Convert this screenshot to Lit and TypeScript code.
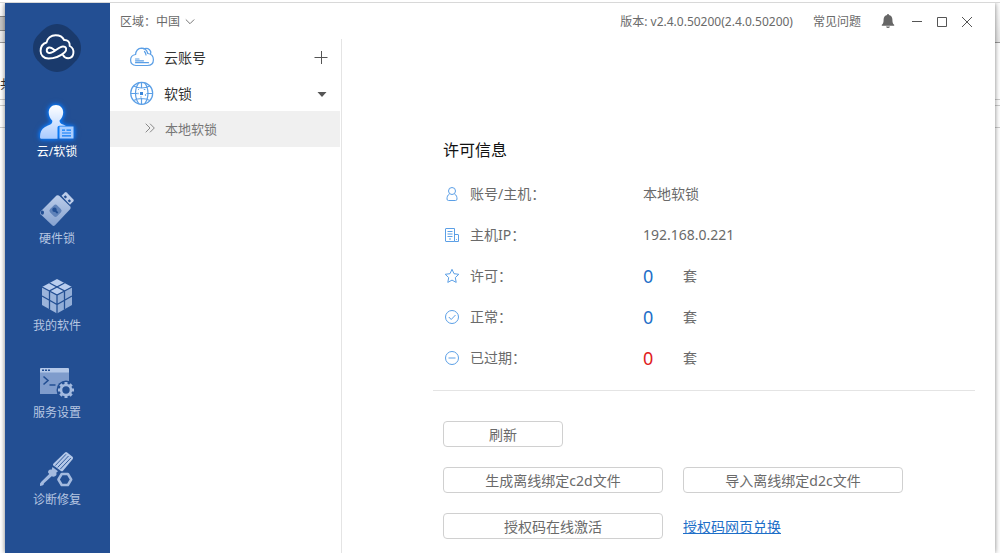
import { LitElement, html, css, svg, TemplateResult } from "lit";
import { customElement, property, state } from "lit/decorators.js";
import { classMap } from "lit/directives/class-map.js";

const cubeFace = (points: string, opacity: string) =>
  svg`<polygon points=${points} fill="#b9cdee" opacity=${opacity} stroke="none"/>`;

const gearTeeth = [0, 45, 90, 135, 180, 225, 270, 315];

const NAV_ICONS: Record<string, TemplateResult> = {
  user: html`<svg viewBox="0 0 40 40" class="glow" aria-hidden="true">
    <defs>
      <linearGradient id="u" x1="0" y1="0" x2="0" y2="1">
        <stop offset="0" stop-color="#ffffff" /><stop offset="1" stop-color="#a9cbff" />
      </linearGradient>
    </defs>
    <path fill="url(#u)" d="M19 3c4.400 0 7.200 3.200 7.200 7.500 0 3.200-1.600 6.300-3.700 8 0 2.200 1.300 3.200 3.500 4.100l3 1.200h-6.500c-1.200 0-2 .8-2 2v11H4.500c-1 0-1.500-.7-1.500-1.800 0-4.500 1.500-7.800 5-9.900 3-1.800 7.300-2.300 7.300-5.500 0-.5 0-.8-.1-1.100-2-1.700-3.500-4.800-3.500-8C11.700 6.200 14.600 3 19 3z" />
    <path fill="#a9cdff" fill-rule="evenodd" d="M22.500 24.500h14v12h-14zM25 27.500v1.200h3v-1.200zm4.500 0v1.200H34v-1.200zM25 30.400v1.200h9v-1.200zM25 33.200v1.200h9v-1.200z" />
  </svg>`,
  usb: html`<svg viewBox="0 0 40 40" aria-hidden="true">
    <defs>
      <linearGradient id="s" x1="0" y1="0" x2="0" y2="1">
        <stop offset="0" stop-color="#bccdea" /><stop offset="1" stop-color="#86a2cf" />
      </linearGradient>
    </defs>
    <path fill="url(#s)" d="M19.500 6.600q1.600-.9 3 .3l10.700 10.500q1 1.200.1 2.700L18 36.300q-1.400 1.200-2.800 0L3.600 25.200q-1-1.200 0-2.600z" />
    <path fill="#bccdea" d="M24.500 6.800l3.400-3.300q.9-.8 1.800 0l6.700 7q.8.900 0 1.800L33 15.800z" />
    <path fill="#234f93" d="M28.300 6.200l1.800 1.700-1.700 1.600-1.700-1.700zM32.300 10.200l1.800 1.700-1.700 1.600-1.700-1.700z" />
    <rect x="13.500" y="16.700" width="10" height="10" rx="2.500" transform="rotate(45 18.500 21.700)" fill="#5f82b9" />
    <circle cx="17.500" cy="20.800" r="2.200" fill="#234f93" /><path stroke="#234f93" stroke-width="1.800" d="M18.500 22l2.200 2" />
    <ellipse cx="5.400" cy="23.600" rx="1.600" ry="2.200" fill="#234f93" />
  </svg>`,
  cube: html`<svg viewBox="0 0 40 40" aria-hidden="true">
    ${cubeFace("20,3 35,11 20,19 5,11", "1")}
    ${cubeFace("5,11 20,19 20,37.500 5,29", "0.800")}
    ${cubeFace("35,11 20,19 20,37.500 35,29", "0.750")}
    <path fill="none" stroke="#234f93" stroke-width="1.300" d="M5 11l15 8 15-8M20 19v19M12.500 7l15 8v18.500M27.500 7l-15 8v18.500M5 20l15 8.500L35 20" />
  </svg>`,
  console: html`<svg viewBox="0 0 40 40" aria-hidden="true">
    <path fill="#7f9ccc" d="M3 9h29v22H3z" />
    <path fill="#b4c8e8" d="M4 5h27q1 0 1 1v3.500H3V6q0-1 1-1z" />
    <path fill="#234f93" d="M5 6.500h2v1.500H5zM8 6.500h2v1.500H8zM11 6.500h2v1.500h-2z" />
    <path fill="none" stroke="#234f93" stroke-width="1.600" d="M6.500 13.500l4.500 4-4.500 4M12.500 22h6" />
    <circle cx="29" cy="27" r="9.500" fill="#234f93" />
    ${gearTeeth.map((a) => svg`<rect x="27.500" y="19" width="3" height="4" fill="#a3badf" transform="rotate(${a} 29 27)"/>`)}
    <circle cx="29" cy="27" r="5" fill="none" stroke="#a3badf" stroke-width="2.600" />
  </svg>`,
  tools: html`<svg viewBox="0 0 40 40" aria-hidden="true">
    <path fill="#b4c8e8" d="M28 2.500q1-.8 2.200 0l5.300 4.200q1 1 .3 2.200L26 20.800q-.8.900-2 .3l-7.600-5.600q-.9-.9-.1-1.800z" />
    <path stroke="#234f93" stroke-width=".9" d="M18.300 15.600L29 4.300M20.700 17.400L31.500 6M23.200 19.200L33.800 8" />
    <path fill="#a3badf" d="M15.500 17l5.500 4.200-1.600 1.300q.6 2.300-1 3.500-1.700 1.200-3.700.3L7 33.300q0 1.800-1.700 2.300L3 36q-.6-2.800 1.300-4.300l7.900-7.700q-2.100-1.700-.8-3.300 1.200-1.400 3.200-1z" />
    <path fill="none" stroke="#a3badf" stroke-width="2.500" stroke-linejoin="round" d="M24.700 24h6.200l3.300 5.500-3.300 5.500h-6.200l-3.300-5.500z" />
  </svg>`,
};

const INFO_ICONS: Record<string, TemplateResult> = {
  person: svg`<circle cx="9" cy="6" r="3.500"/><path d="M6.500 9C4.500 10 4 12 4 14q0 1.500 1.500 1.500h7Q14 15.500 14 14c0-2-.5-4-2.500-5"/>`,
  host: svg`<path d="M3 2.500h8.500v13H3q-.5 0-.5-.5V3q0-.5.5-.5zM11.500 8.500H15q.5 0 .5.500v6.500h-4M4.500 5.500h5M4.500 8h5M4.500 10.500h5M13.500 13v.8M6 13h2"/>`,
  star: svg`<path stroke-linejoin="round" d="M9 2.300l2 4.400 4.800.6-3.500 3.300.9 4.800L9 13.100l-4.200 2.300.9-4.800-3.500-3.300 4.800-.6z"/>`,
  check: svg`<circle cx="9" cy="9" r="6.500"/><path d="M5.800 9l2.400 2.500 4.300-4.500"/>`,
  minus: svg`<circle cx="9" cy="9" r="6.500"/><path d="M5.500 9h7"/>`,
};

const FONT = css`
  :host {
    font-family: "Noto Sans", "Noto Sans CJK SC", sans-serif;
  }
  button {
    font: inherit;
    color: inherit;
    background: none;
    border: 0;
    padding: 0;
    cursor: pointer;
  }
  svg {
    display: block;
  }
`;

@customElement("side-nav")
class SideNav extends LitElement {
  @state() private active = "user";

  private items = [
    { id: "user", text: "云/软锁" },
    { id: "usb", text: "硬件锁" },
    { id: "cube", text: "我的软件" },
    { id: "console", text: "服务设置" },
    { id: "tools", text: "诊断修复" },
  ];

  static styles = [
    FONT,
    css`
      :host {
        display: flex;
        flex-direction: column;
        align-items: stretch;
        box-sizing: border-box;
        padding: 21px 1px 0 0;
        background: #234f93;
      }
      .logo {
        align-self: center;
        width: 48px;
        height: 48px;
        margin-bottom: 30px;
      }
      nav {
        display: flex;
        flex-direction: column;
      }
      .item {
        display: flex;
        flex-direction: column;
        align-items: center;
        height: 87px;
        font-size: 12px;
        line-height: 20px;
        color: #b6c6e2;
      }
      .item svg {
        width: 40px;
        height: 40px;
        flex: none;
      }
      .active {
        color: #ffffff;
      }
      .glow {
        filter: drop-shadow(0 0 2px #0a84ff) drop-shadow(0 0 2px #0a6cf0);
      }
    `,
  ];

  render() {
    return html`
      <svg class="logo" viewBox="0 0 48 48" role="img" aria-label="云">
        <path fill="#1a3a6c" d="M24 0c7 0 12 4 16.500 8.500S48 17 48 24s-3 11-7.500 15.500S31 48 24 48s-12-4-16.500-8.500S0 31 0 24 3 13 7.500 8.500 17 0 24 0z" />
        <path fill="none" stroke="#fff" stroke-width="1.900" stroke-linecap="round" stroke-linejoin="round"
          d="M22 26.500c-2-1.500-3.500-3.500-6-3-3 .7-3 5 0 5.500 5 .8 9-6.500 14-6.500 3.500 0 4.300 3.500 1.500 6C28 31.500 22 34.500 15.500 34.500 10.500 34.500 7.600 31 7.600 27c0-4.500 2.500-7.500 6-8.500.5-4.500 4.500-7.300 9-7.300 4 0 7 1.500 8.500 4.800 3.500-.3 6 2.200 5.600 6 3 1.500 4 4.500 3.700 7.200-.4 3.300-2.500 5-5.300 5-2.500 0-4-1.200-5-3" />
      </svg>
      <nav>
        ${this.items.map(
          (it) => html`<button
            class=${classMap({ item: true, active: it.id === this.active })}
            @click=${() => (this.active = it.id)}
          >
            ${NAV_ICONS[it.id]}<span>${it.text}</span>
          </button>`
        )}
      </nav>
    `;
  }
}

@customElement("title-bar")
class TitleBar extends LitElement {
  static styles = [
    FONT,
    css`
      :host {
        display: flex;
        align-items: center;
        justify-content: space-between;
        box-sizing: border-box;
        height: 36px;
        padding: 2px 23px 0 10px;
        font-size: 12px;
        line-height: 18px;
        color: #6a6a6a;
      }
      .region,
      .tools,
      .window {
        display: flex;
        align-items: center;
      }
      .picker {
        display: grid;
        align-items: center;
        justify-items: end;
      }
      select {
        grid-area: 1 / 1;
        appearance: none;
        border: 0;
        padding: 0 14px 0 0;
        margin: 0;
        background: none;
        font: inherit;
        color: inherit;
      }
      .picker svg {
        grid-area: 1 / 1;
        pointer-events: none;
      }
      .tools {
        gap: 20px;
      }
      .window {
        gap: 15px;
      }
    `,
  ];

  render() {
    return html`
      <div class="region">
        <label for="region">区域：</label>
        <span class="picker">
          <select id="region"><option>中国</option></select>
          <svg width="10" height="10" viewBox="0 0 10 10" fill="none" stroke="#777"><path d="M.8 2.500L5 6.700 9.200 2.500" /></svg>
        </span>
      </div>
      <div class="tools">
        <span>版本: v2.4.0.50200(2.4.0.50200)</span>
        <button>常见问题</button>
        <div class="window">
          <button aria-label="通知">
            <svg width="16" height="16" viewBox="0 0 16 16" fill="#666"><path d="M6.200.500q0-.8.800-.8t.8.800v.5c2.400.5 3.600 2.300 3.600 4.500 0 2.500.3 4.300 1.800 5.300v.9H.8v-.9c1.500-1 1.800-2.800 1.800-5.300C2.600 3.300 3.900 1.500 6.200 1zM5 12.500h4Q8.500 14 7 14t-2-1.500z" /></svg>
          </button>
          <button aria-label="最小化">
            <svg width="10" height="10" viewBox="0 0 10 10" stroke="#555"><path d="M0 4.500h10" /></svg>
          </button>
          <button aria-label="最大化">
            <svg width="10" height="10" viewBox="0 0 10 10" fill="none" stroke="#555"><path d="M.5.500h9v9h-9z" /></svg>
          </button>
          <button aria-label="关闭">
            <svg width="10" height="10" viewBox="0 0 10 10" stroke="#555"><path d="M0 0l10 10M10 0L0 10" /></svg>
          </button>
        </div>
      </div>
    `;
  }
}

@customElement("lock-list")
class LockList extends LitElement {
  @state() private open = true;

  static styles = [
    FONT,
    css`
      :host {
        display: block;
        box-sizing: border-box;
        padding-right: 1px;
        border-right: 1px solid #e4e4e4;
        font-size: 14px;
        color: #333333;
      }
      .row {
        display: flex;
        align-items: center;
        gap: 10px;
        width: 100%;
        height: 36px;
        padding: 0 12px 0 20px;
        box-sizing: border-box;
        text-align: left;
      }
      .name {
        flex: 1;
      }
      .sub {
        padding: 0 12px 2px 35px;
        font-size: 13px;
        color: #777777;
        background: #f0f0f0;
      }
    `,
  ];

  render() {
    return html`
      <div class="row">
        <svg width="24" height="24" viewBox="0 0 24 24" fill="none" stroke="#5b9fe6" stroke-width="1.200" stroke-linecap="round">
          <path d="M6 20.500q-5.400-.4-5.400-5.500 0-4.800 5-5.500Q6 3.500 11.500 3.100q4.800 0 6.300 5.400 5.600.5 5.600 6.300 0 5.700-6 5.700z" />
          <path d="M13.500 3.800q4-1 6 .9t1 4.300M14.500 6.500q1.300 1.500 1.500 3.500M5.500 14h3.500M5.500 15.800h8M5.500 17.700h13" />
        </svg>
        <span class="name">云账号</span>
        <button aria-label="添加云账号">
          <svg width="14" height="14" viewBox="0 0 14 14" stroke="#555"><path d="M.5 7.500h13M7.500 1v13" /></svg>
        </button>
      </div>
      <button class="row" aria-expanded=${this.open} @click=${() => (this.open = !this.open)}>
        <svg width="24" height="24" viewBox="0 0 24 24" fill="none" stroke="#5b9fe6" stroke-width="1.200">
          <circle cx="11.700" cy="12.300" r="11" />
          <path d="M3.500 5q8.200 4 16.400 0M3.500 19.500q8.200-4 16.400 0M.7 12.500h6.500M16.500 12.500H23M11.500 1.300v6M11.500 17v6.300M9 1.600Q5.500 6 5.500 12.300T9 23M14.500 1.600Q18 6 18 12.300T14.500 23" />
          <path stroke-dasharray="1.500 5" stroke-dashoffset=".7" d="M8 8.500h7.500v7.500H8z" />
          <path fill="#3b86d8" stroke="none" d="M10 11h3v3h-3z" />
        </svg>
        <span class="name">软锁</span>
        <svg width="12" height="12" viewBox="0 0 12 12" fill="#555"><path d="M1.500 5h9L6 10z" /></svg>
      </button>
      ${this.open
        ? html`<button class="row sub">
            <svg width="10" height="10" viewBox="0 0 10 10" fill="none" stroke="#888"><path d="M.7.700L5 5 .7 9.300M5 .700L9.300 5 5 9.300" /></svg>
            <span>本地软锁</span>
          </button>`
        : null}
    `;
  }
}

@customElement("license-info")
class LicenseInfo extends LitElement {
  private rows = [
    { icon: "person", label: "账号/主机：", value: "本地软锁" },
    { icon: "host", label: "主机IP：", value: "192.168.0.221" },
    { icon: "star", label: "许可：", count: 0 },
    { icon: "check", label: "正常：", count: 0 },
    { icon: "minus", label: "已过期：", count: 0, alert: true },
  ];

  static styles = [
    FONT,
    css`
      :host {
        display: block;
        box-sizing: border-box;
        padding: 99px 20px 0 91px;
        font-size: 14px;
        line-height: 20px;
        color: #6a6a6a;
      }
      h1 {
        margin: 0 0 11px;
        padding-left: 10px;
        font-size: 16px;
        font-weight: 400;
        line-height: 24px;
        color: #111111;
      }
      dl {
        margin: 0;
        padding: 0 0 12px 10px;
        border-bottom: 1px solid #e4e4e4;
      }
      .row {
        display: grid;
        grid-template-columns: 200px 1fr;
        align-items: center;
        height: 41px;
      }
      dt,
      dd {
        display: flex;
        align-items: center;
        margin: 0;
      }
      dt {
        gap: 9px;
      }
      .count {
        width: 40px;
        font-size: 18px;
        color: #1e6fc8;
      }
      .alert {
        color: #e02020;
      }
      .actions {
        display: grid;
        grid-template-columns: 220px 220px;
        gap: 20px;
        padding: 30px 0 14px 10px;
      }
      .btn {
        box-sizing: border-box;
        height: 26px;
        padding-top: 2px;
        border: 1px solid #d0d0d0;
        border-radius: 4px;
        background: #ffffff;
      }
      .short {
        width: 120px;
        grid-column: 1 / -1;
      }
      a {
        align-self: center;
        justify-self: start;
        padding-top: 2px;
        color: #1e6fc8;
      }
    `,
  ];

  render() {
    return html`
      <h1>许可信息</h1>
      <dl>
        ${this.rows.map(
          (r) => html`<div class="row">
            <dt>
              <svg width="18" height="18" viewBox="0 0 18 18" fill="none" stroke="#5b9fe6">${INFO_ICONS[r.icon]}</svg>
              ${r.label}
            </dt>
            <dd>
              ${r.value ??
              html`<span class=${classMap({ count: true, alert: !!r.alert })}>${r.count}</span><span>套</span>`}
            </dd>
          </div>`
        )}
      </dl>
      <div class="actions">
        <button class="btn short">刷新</button>
        <button class="btn">生成离线绑定c2d文件</button>
        <button class="btn">导入离线绑定d2c文件</button>
        <button class="btn">授权码在线激活</button>
        <a href="#redeem">授权码网页兑换</a>
      </div>
    `;
  }
}

@customElement("back-strip")
class BackStrip extends LitElement {
  @property() text = "";

  static styles = [
    FONT,
    css`
      :host {
        display: block;
        overflow: hidden;
        background: #ffffff;
        font-size: 12px;
        line-height: 16px;
        color: #333333;
      }
      div {
        box-sizing: border-box;
        border-bottom: 1px solid #cccccc;
      }
      .bar {
        height: 40px;
        padding-top: 13px;
        border-color: #999999;
        background: linear-gradient(#ffffff, #e8e8e8);
      }
      .chip {
        display: block;
        box-sizing: border-box;
        height: 15px;
        border: 1px solid #888888;
        border-width: 1px 0;
        background: #c4c4c4;
      }
      .line {
        display: flex;
        align-items: flex-end;
        height: 57px;
        padding-bottom: 6px;
        white-space: nowrap;
      }
      .thin {
        height: 6px;
      }
      .wide {
        height: 22px;
      }
    `,
  ];

  render() {
    return html`
      <div class="bar">${this.text ? html`<span class="chip"></span>` : null}</div>
      <div class="line">${this.text}</div>
      <div class="thin"></div>
      <div class="wide"></div>
    `;
  }
}

@customElement("app-root")
class AppRoot extends LitElement {
  static styles = css`
    :host {
      display: grid;
      grid-template: 3px 1fr / 5px 1fr 5px;
      min-height: 100vh;
      background: #ffffff;
    }
    .edge {
      grid-column: 1 / -1;
      box-sizing: border-box;
      border-bottom: 1px solid #d8d8d8;
    }
    .window {
      display: grid;
      grid-template: auto 1fr / 105px 232px 1fr;
      background: #ffffff;
      box-shadow: 0 0 5px rgba(0, 0, 0, 0.5);
      clip-path: inset(0 -5px);
      z-index: 1;
    }
    side-nav {
      grid-row: 1 / -1;
    }
    title-bar {
      grid-column: 2 / -1;
    }
  `;

  render() {
    return html`
      <div class="edge"></div>
      <back-strip text="共"></back-strip>
      <div class="window">
        <side-nav></side-nav>
        <title-bar></title-bar>
        <lock-list></lock-list>
        <license-info></license-info>
      </div>
      <back-strip></back-strip>
    `;
  }
}
